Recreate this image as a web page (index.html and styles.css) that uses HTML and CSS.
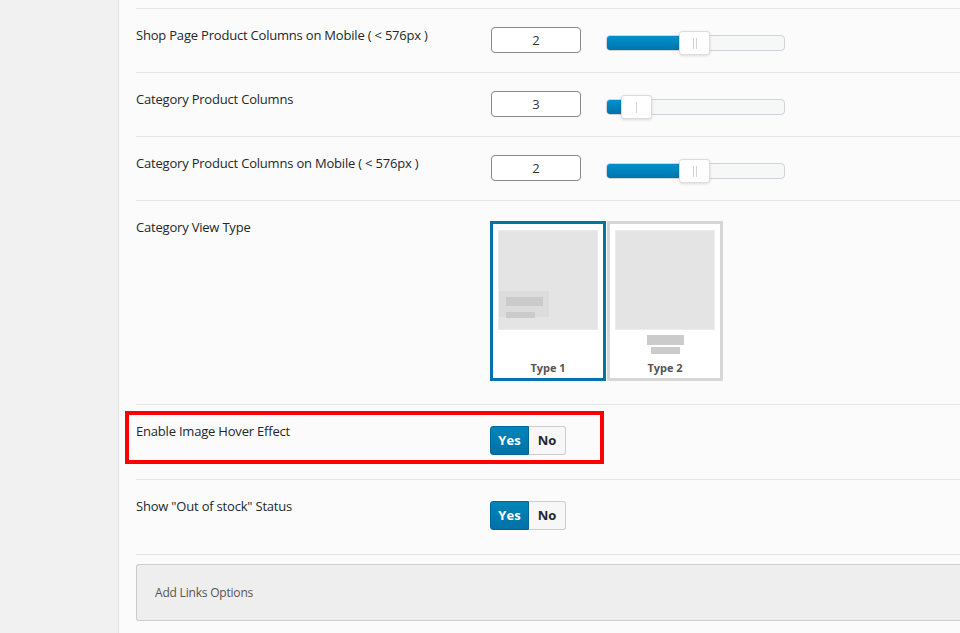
FILE: index.html
```html
<!DOCTYPE html>
<html lang="en">
<head>
<meta charset="utf-8">
<title>Shop settings</title>
<link rel="stylesheet" href="styles.css">
</head>
<body>
<div class="layout">
  <aside class="sidebar"></aside>
  <main class="content">
    <div class="row row-cut"></div>

    <div class="row">
      <div class="label">Shop Page Product Columns on Mobile ( &lt; 576px )</div>
      <div class="control">
        <div class="num">2</div>
        <div class="slider">
          <div class="slider-fill" style="width:50%"></div>
          <span class="slider-handle" style="left:72px"><i></i><i></i></span>
        </div>
      </div>
    </div>

    <div class="row">
      <div class="label">Category Product Columns</div>
      <div class="control">
        <div class="num">3</div>
        <div class="slider">
          <div class="slider-fill" style="width:10%"></div>
          <span class="slider-handle" style="left:14px"><i></i></span>
        </div>
      </div>
    </div>

    <div class="row">
      <div class="label">Category Product Columns on Mobile ( &lt; 576px )</div>
      <div class="control">
        <div class="num">2</div>
        <div class="slider">
          <div class="slider-fill" style="width:50%"></div>
          <span class="slider-handle" style="left:72px"><i></i><i></i></span>
        </div>
      </div>
    </div>

    <div class="row">
      <div class="label">Category View Type</div>
      <div class="control">
        <div class="types">
          <div class="type active">
            <div class="thumb">
              <span class="overlay"><b class="bar bar-lg"></b><b class="bar bar-sm"></b></span>
            </div>
            <span class="type-label">Type 1</span>
          </div>
          <div class="type">
            <div class="thumb"></div>
            <b class="bar bar-lg"></b><b class="bar bar-sm"></b>
            <span class="type-label">Type 2</span>
          </div>
        </div>
      </div>
    </div>

    <div class="row row-toggle">
      <div class="label">Enable Image Hover Effect</div>
      <div class="control">
        <div class="toggle"><span class="on">Yes</span><span class="off">No</span></div>
      </div>
      <div class="highlight"></div>
    </div>

    <div class="row row-toggle">
      <div class="label">Show "Out of stock" Status</div>
      <div class="control">
        <div class="toggle"><span class="on">Yes</span><span class="off">No</span></div>
      </div>
    </div>

    <div class="section-head">Add Links Options</div>
  </main>
</div>
</body>
</html>
```

FILE: styles.css
```css
html, body {
  margin: 0;
  padding: 0;
  height: 100%;
  overflow: hidden;
}
body {
  font-family: "Open Sans", "Noto Sans", sans-serif;
  font-size: 13px;
  color: #23282d;
  background: #fbfbfb;
}
.layout {
  display: flex;
  min-height: 100%;
}
.sidebar {
  width: 118px;
  flex: none;
  background: #f1f1f1;
  border-right: 1px solid #e0e0e0;
}
.content {
  flex: 1;
  padding-left: 17px;
  background: #fbfbfb;
}
.row {
  position: relative;
  display: grid;
  grid-template-columns: 354px 1fr;
  padding: 18px 0 19px;
  border-bottom: 1px solid #e5e5e5;
}
.row-cut {
  height: 9px;
  padding: 0;
  box-sizing: border-box;
}
.label {
  line-height: 16px;
  letter-spacing: -0.2px;
}
.control {
  display: flex;
  align-items: flex-start;
  gap: 25px;
}
.num {
  box-sizing: border-box;
  width: 90px;
  height: 26px;
  margin-left: 1px;
  border: 1px solid #7e8993;
  border-radius: 4px;
  background: #fff;
  text-align: center;
  line-height: 24px;
  color: #32373c;
}
.slider {
  position: relative;
  box-sizing: border-box;
  width: 179px;
  height: 16px;
  margin-top: 8px;
  border: 1px solid #cfd4da;
  border-radius: 4px;
  background: #f7f7f7;
}
.slider-fill {
  height: 100%;
  border-radius: 3px 0 0 3px;
  background: linear-gradient(#0091cd, #0073aa);
}
.slider-handle {
  position: absolute;
  top: -5px;
  box-sizing: border-box;
  width: 31px;
  height: 24px;
  display: flex;
  justify-content: center;
  align-items: center;
  gap: 2px;
  border: 1px solid #dcdcdc;
  border-radius: 3px;
  background: #fff;
  box-shadow: 0 1px 3px rgba(0, 0, 0, 0.12);
}
.slider-handle i {
  width: 1px;
  height: 11px;
  background: #d4d4d4;
}
.types {
  display: flex;
  gap: 1px;
  margin: 2px 0 4px;
}
.type {
  box-sizing: border-box;
  width: 116px;
  height: 160px;
  padding: 6px 5px 0;
  border: 3px solid #d6d6d6;
  background: #fff;
  display: flex;
  flex-direction: column;
  align-items: center;
}
.type.active {
  border-color: #0073aa;
}
.thumb {
  position: relative;
  box-sizing: border-box;
  width: 100px;
  height: 100px;
  flex: none;
  background: #e4e4e4;
  border: 1px solid #ececec;
}
.overlay {
  position: absolute;
  left: 0;
  top: 60px;
  width: 50px;
  height: 26px;
  background: #dcdcdc;
}
.bar {
  display: block;
  background: #cbcbcb;
}
.bar-lg {
  width: 37px;
  height: 10px;
}
.bar-sm {
  width: 29px;
  height: 7px;
}
.overlay .bar {
  margin-left: 7px;
}
.overlay .bar-lg {
  margin-top: 6px;
  height: 9px;
}
.overlay .bar-sm {
  margin-top: 6px;
  height: 6px;
}
.type > .bar-lg {
  margin-top: 5px;
}
.type > .bar-sm {
  margin-top: 2px;
}
.type-label {
  margin-top: auto;
  padding-bottom: 2px;
  font-size: 11px;
  font-weight: 700;
  color: #555;
  line-height: 16px;
}
.row-toggle {
  padding-bottom: 24px;
}
.toggle {
  display: flex;
  margin-top: 3px;
  height: 29px;
  font-weight: 700;
  font-size: 13px;
}
.toggle span {
  box-sizing: border-box;
  height: 29px;
  line-height: 27px;
  text-align: center;
}
.toggle .on {
  width: 39px;
  color: #fff;
  background: linear-gradient(#0085ba, #0071a6);
  border: 1px solid #006799;
  border-radius: 3px 0 0 3px;
}
.toggle .off {
  width: 37px;
  color: #23282d;
  background: #f7f7f7;
  border: 1px solid #cccccc;
  border-left: none;
  border-radius: 0 3px 3px 0;
}
.highlight {
  position: absolute;
  left: -11px;
  top: 6px;
  box-sizing: border-box;
  width: 479px;
  height: 53px;
  border: 4px solid #ff0000;
}
.section-head {
  margin-top: 9px;
  height: 57px;
  box-sizing: border-box;
  padding-left: 18px;
  line-height: 55px;
  font-size: 12px;
  letter-spacing: -0.2px;
  color: #555;
  background: #eeeeee;
  border: 1px solid #cccccc;
  border-right: none;
  border-radius: 3px 0 0 3px;
}
```
